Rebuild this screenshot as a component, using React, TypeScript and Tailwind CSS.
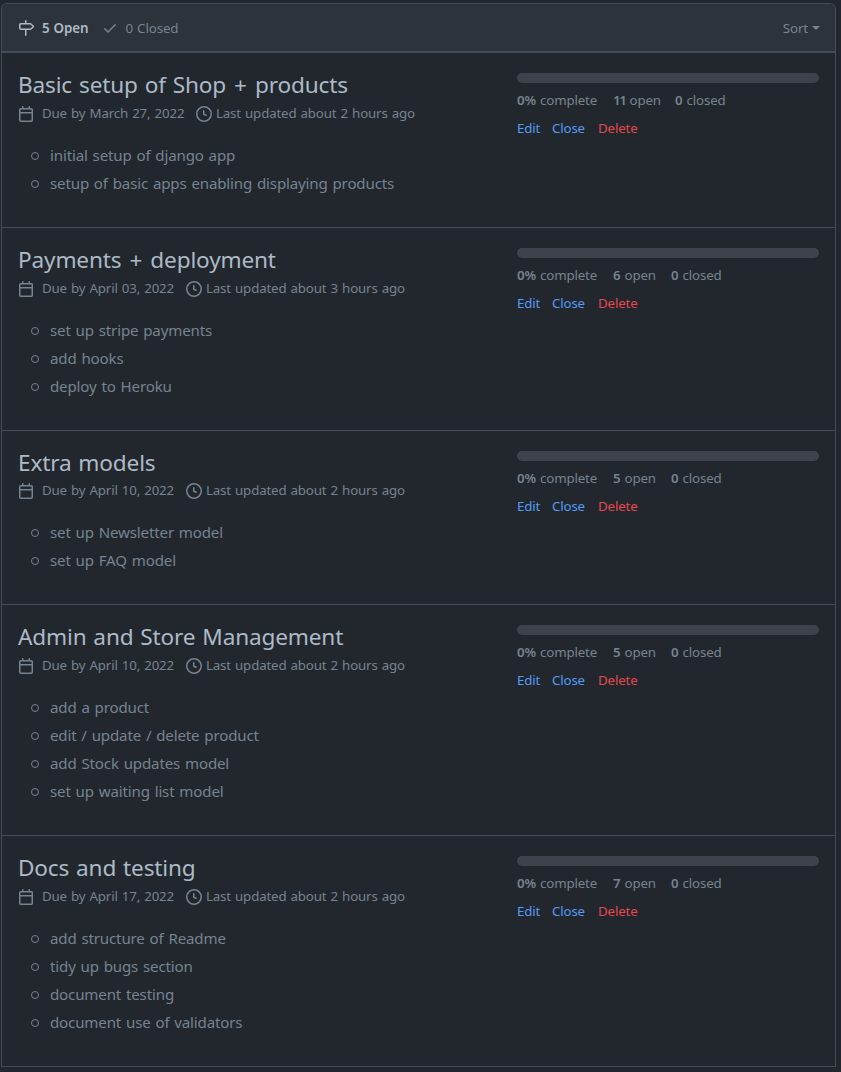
type Milestone = {
  title: string;
  due: string;
  updated: string;
  open: number;
  items: string[];
  height: string;
  nudge?: boolean;
};

const milestones: Milestone[] = [
  {
    title: 'Basic setup of Shop + products',
    due: 'March 27, 2022',
    updated: '2 hours',
    open: 11,
    items: ['initial setup of django app', 'setup of basic apps enabling displaying products'],
    height: 'h-[175px]',
  },
  {
    title: 'Payments + deployment',
    due: 'April 03, 2022',
    updated: '3 hours',
    open: 6,
    items: ['set up stripe payments', 'add hooks', 'deploy to Heroku'],
    height: 'h-[203px]',
  },
  {
    title: 'Extra models',
    due: 'April 10, 2022',
    updated: '2 hours',
    open: 5,
    items: ['set up Newsletter model', 'set up FAQ model'],
    height: 'h-[174px]',
    nudge: true,
  },
  {
    title: 'Admin and Store Management',
    due: 'April 10, 2022',
    updated: '2 hours',
    open: 5,
    items: ['add a product', 'edit / update / delete product', 'add Stock updates model', 'set up waiting list model'],
    height: 'h-[231px]',
  },
  {
    title: 'Docs and testing',
    due: 'April 17, 2022',
    updated: '2 hours',
    open: 7,
    items: ['add structure of Readme', 'tidy up bugs section', 'document testing', 'document use of validators'],
    height: 'h-[231px]',
  },
];

const paths = {
  milestone:
    'M7.75 0a.75.75 0 01.75.75V3h3.634c.414 0 .814.147 1.13.414l2.07 1.75a1.75 1.75 0 010 2.672l-2.07 1.75a1.75 1.75 0 01-1.13.414H8.5v5.25a.75.75 0 11-1.5 0V10H2.75A1.75 1.75 0 011 8.25v-3.5C1 3.784 1.784 3 2.75 3H7V.75A.75.75 0 017.75 0zm0 8.5h4.384a.25.25 0 00.161-.06l2.07-1.75a.25.25 0 000-.38l-2.07-1.75a.25.25 0 00-.161-.06H2.75a.25.25 0 00-.25.25v3.5c0 .138.112.25.25.25h5z',
  check:
    'M13.78 4.22a.75.75 0 010 1.06l-7.25 7.25a.75.75 0 01-1.06 0L2.22 9.28a.75.75 0 011.06-1.06L6 10.94l6.72-6.72a.75.75 0 011.06 0z',
  calendar:
    'M4.75 0a.75.75 0 01.75.75V2h5V.75a.75.75 0 011.5 0V2h1.25c.966 0 1.75.784 1.75 1.75v10.5A1.75 1.75 0 0113.25 16H2.75A1.75 1.75 0 011 14.25V3.75C1 2.784 1.784 2 2.75 2H4V.75A.75.75 0 014.75 0zm0 3.5h8.5a.25.25 0 01.25.25V6h-11V3.75a.25.25 0 01.25-.25h2zm-2.25 4v6.75c0 .138.112.25.25.25h10.5a.25.25 0 00.25-.25V7.5h-11z',
  clock:
    'M1.5 8a6.5 6.5 0 1113 0 6.5 6.5 0 01-13 0zM8 0a8 8 0 100 16A8 8 0 008 0zm.5 4.75a.75.75 0 00-1.5 0v3.5a.75.75 0 00.471.696l2.5 1a.75.75 0 00.557-1.392L8.5 7.742V4.75z',
};

function Icon({ name, className = '' }: { name: keyof typeof paths; className?: string }) {
  return (
    <svg viewBox="0 0 16 16" width="16" height="16" fill="currentColor" fillRule="evenodd" className={`shrink-0 ${className}`}>
      <path d={paths[name]} />
    </svg>
  );
}

function Title({ text }: { text: string }) {
  const [before, after] = text.split('+');
  return (
    <h2 className="h-8 whitespace-nowrap text-[22.6px] leading-8 text-[#adbac7] [word-spacing:1.2px]">
      {before}
      {after !== undefined && (
        <>
          <span className="mx-[1.2px]">+</span>
          {after}
        </>
      )}
    </h2>
  );
}

function MilestoneRow({ m }: { m: Milestone }) {
  return (
    <li className={`flex border-b border-[#444c56] pl-4 pr-4 ${m.height}`}>
      <div className="w-[499px] shrink-0 pt-4">
        <Title text={m.title} />
        <div className={`flex h-6 items-center whitespace-nowrap text-[13.3px] [word-spacing:0.8px] ${m.nudge ? '-mt-px' : ''}`}>
          <Icon name="calendar" className="mt-0.5" />
          <span className={`ml-2 mt-0.5 shrink-0 ${m.title.startsWith('Basic') ? 'w-[146px]' : 'w-[136px]'}`}>Due by {m.due}</span>
          <Icon name="clock" className="mt-0.5 ml-2" />
          <span className="ml-1 mt-0.5">Last updated about {m.updated} ago</span>
        </div>
        <ul className="mt-4 text-[15.1px] leading-7 [word-spacing:1.1px]">
          {m.items.map((item) => (
            <li key={item} className="flex items-center whitespace-nowrap">
              <span className="mr-[11px] ml-[13px] mt-0.5 size-2 rounded-full border border-[#768390]" />
              {item}
            </li>
          ))}
        </ul>
      </div>
      <div className="min-w-0 flex-1 pt-5 text-[13.3px] [word-spacing:0.8px]">
        <div className="h-2.5 rounded-full bg-[#3d424b]" />
        <div className="mt-2 flex h-5 items-center whitespace-nowrap">
          <span className="w-24"><b className="font-semibold">0%</b> complete</span>
          <span className={m.open > 9 ? 'w-[62px]' : 'w-[58px]'}>
            <b className={m.open > 9 ? 'font-semibold tracking-[-1.4px]' : 'font-semibold'}>{m.open}</b> open
          </span>
          <span><b className="font-semibold">0</b> closed</span>
        </div>
        <div className="mt-2 flex h-5 items-center whitespace-nowrap text-[#539bf5]">
          <a className="w-[35px]">Edit</a>
          <a className="w-[46px]">Close</a>
          <a className="text-[#e5484d]">Delete</a>
        </div>
      </div>
    </li>
  );
}

export default function App() {
  return (
    <div className="h-[1072px] w-[841px] bg-[#22272e] pt-[3px] pl-px font-['Noto_Sans',sans-serif] tracking-[-0.01em] text-[#768390]">
      <main className="w-[835px] overflow-hidden rounded-t-md border-x border-t border-[#444c56]">
        <header className="flex h-[49px] items-center border-b-2 border-[#444c56] bg-[#2d333b] pl-4 pr-[15px] pt-0.5 text-[13.4px] [word-spacing:0.8px]">
          <a className="flex w-[84px] items-center whitespace-nowrap font-semibold text-[#adbac7]">
            <Icon name="milestone" className="mr-2" />5 Open
          </a>
          <a className="flex items-center whitespace-nowrap">
            <Icon name="check" className="mr-[7.5px]" />0 Closed
          </a>
          <a className="ml-auto flex items-center gap-1">
            Sort
            <span className="border-x-4 border-t-4 border-x-transparent border-t-[#768390]" />
          </a>
        </header>
        <ul>
          {milestones.map((m) => (
            <MilestoneRow key={m.title} m={m} />
          ))}
        </ul>
      </main>
    </div>
  );
}
